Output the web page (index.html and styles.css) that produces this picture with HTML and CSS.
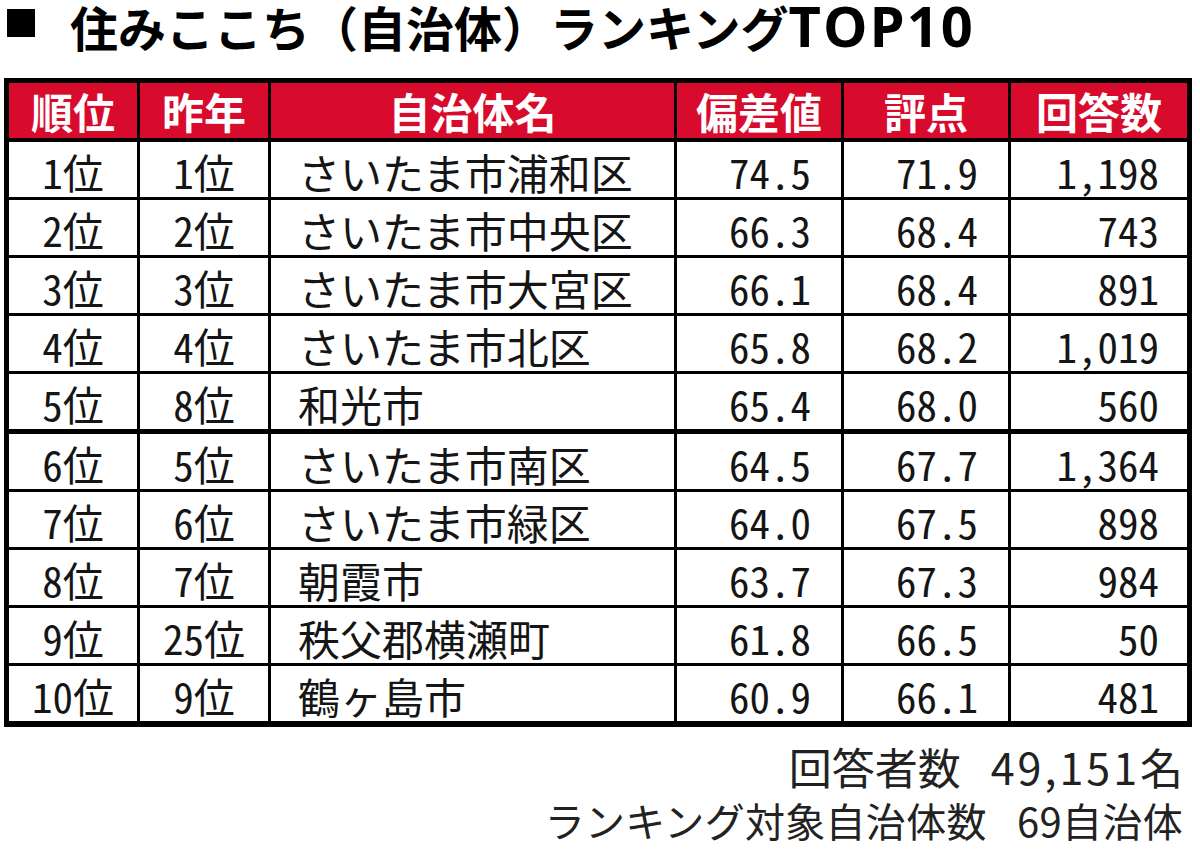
FILE: index.html
```html
<!DOCTYPE html>
<html lang="ja">
<head>
<meta charset="utf-8">
<title>住みここち（自治体）ランキングTOP10</title>
<link rel="stylesheet" href="styles.css">
</head>
<body>
<div class="page">
  <h1 class="title"><span class="square"></span><span class="title-text">住みここち（自治体）ランキング<span class="latin">TOP10</span></span></h1>
  <table class="rank">
    <thead>
      <tr>
        <th>順位</th><th>昨年</th><th>自治体名</th><th>偏差値</th><th>評点</th><th>回答数</th>
      </tr>
    </thead>
    <tbody>
      <tr><td class="c">1位</td><td class="c">1位</td><td class="name">さいたま市浦和区</td><td class="num">74.5</td><td class="num">71.9</td><td class="num">1,198</td></tr>
      <tr><td class="c">2位</td><td class="c">2位</td><td class="name">さいたま市中央区</td><td class="num">66.3</td><td class="num">68.4</td><td class="num">743</td></tr>
      <tr><td class="c">3位</td><td class="c">3位</td><td class="name">さいたま市大宮区</td><td class="num">66.1</td><td class="num">68.4</td><td class="num">891</td></tr>
      <tr><td class="c">4位</td><td class="c">4位</td><td class="name">さいたま市北区</td><td class="num">65.8</td><td class="num">68.2</td><td class="num">1,019</td></tr>
      <tr class="group-end"><td class="c">5位</td><td class="c">8位</td><td class="name">和光市</td><td class="num">65.4</td><td class="num">68.0</td><td class="num">560</td></tr>
      <tr><td class="c">6位</td><td class="c">5位</td><td class="name">さいたま市南区</td><td class="num">64.5</td><td class="num">67.7</td><td class="num">1,364</td></tr>
      <tr><td class="c">7位</td><td class="c">6位</td><td class="name">さいたま市緑区</td><td class="num">64.0</td><td class="num">67.5</td><td class="num">898</td></tr>
      <tr><td class="c">8位</td><td class="c">7位</td><td class="name">朝霞市</td><td class="num">63.7</td><td class="num">67.3</td><td class="num">984</td></tr>
      <tr><td class="c">9位</td><td class="c">25位</td><td class="name">秩父郡横瀬町</td><td class="num">61.8</td><td class="num">66.5</td><td class="num">50</td></tr>
      <tr class="last"><td class="c">10位</td><td class="c">9位</td><td class="name">鶴ヶ島市</td><td class="num">60.9</td><td class="num">66.1</td><td class="num">481</td></tr>
    </tbody>
  </table>
  <div class="notes">
    <p class="note-1">回答者数<span class="sp">　</span><span class="digits">49,151</span>名</p>
    <p class="note-2">ランキング対象自治体数<span class="sp">　</span>69自治体</p>
  </div>
</div>
</body>
</html>
```

FILE: styles.css
```css
html, body {
  margin: 0;
  padding: 0;
  background: #ffffff;
}

.page {
  width: 1188px;
  padding-left: 4px;
  font-family: "Noto Sans CJK JP", "Noto Sans", sans-serif;
  color: #151515;
}

.title {
  display: flex;
  align-items: flex-start;
  gap: 35px;
  margin: 0;
  padding-left: 3px;
  height: 78px;
  font-size: 48px;
  line-height: 52px;
  font-weight: 700;
  color: #000;
}

.square {
  display: block;
  width: 28px;
  height: 28px;
  margin-top: 9px;
  background: #000;
  flex: none;
}

.title-text {
  white-space: nowrap;
  margin-top: -1px;
}

.latin {
  font-family: "Open Sans", "Noto Sans", sans-serif;
  font-size: 56px;
  line-height: 52px;
  font-weight: 700;
  letter-spacing: 2px;
}

.rank {
  border-collapse: separate;
  border-spacing: 0;
  border: 5px solid #000;
  border-bottom-width: 6px;
  width: 1188px;
  table-layout: fixed;
}

.rank th,
.rank td {
  padding: 0;
  border-right: 3px solid #000;
  border-bottom: 3px solid #000;
  white-space: nowrap;
}

.rank th:last-child,
.rank td:last-child {
  border-right: 0;
}

.rank th:nth-child(1), .rank td:nth-child(1) { width: 128px; }
.rank th:nth-child(2), .rank td:nth-child(2) { width: 128px; }
.rank th:nth-child(3), .rank td:nth-child(3) { width: 403px; }
.rank th:nth-child(4), .rank td:nth-child(4) { width: 164px; }
.rank th:nth-child(5), .rank td:nth-child(5) { width: 164px; }
.rank th:nth-child(6), .rank td:nth-child(6) { width: 176px; }

.rank th {
  background: #d80b2d;
  color: #ffffff;
  font-size: 42px;
  font-weight: 700;
  height: 55px;
  line-height: 55px;
  border-bottom-width: 4px;
  text-align: center;
}

.rank td {
  font-size: 41px;
  font-feature-settings: "hwid" 1;
  vertical-align: middle;
  padding-top: 4px;
  height: 51px;
  line-height: 51px;
}

.rank .group-end td {
  border-bottom-width: 5px;
}

.rank .last td {
  border-bottom: 0;
}

.rank .c {
  text-align: center;
}

.rank .name {
  text-align: left;
  padding-left: 27px;
  font-size: 42px;
}

.rank .num {
  text-align: right;
  padding-right: 30px;
}

.rank .num:last-child {
  padding-right: 28px;
}

.notes {
  text-align: right;
  padding-right: 9px;
  margin-top: 14px;
  color: #222;
}

.notes p {
  margin: 0;
  white-space: nowrap;
}

.note-1 {
  font-size: 43px;
  line-height: 50px;
}

.note-2 {
  font-size: 40px;
  line-height: 46px;
  letter-spacing: 0.3px;
}

.sp {
  font-size: 30px;
}

.digits {
  letter-spacing: 3px;
}
```
